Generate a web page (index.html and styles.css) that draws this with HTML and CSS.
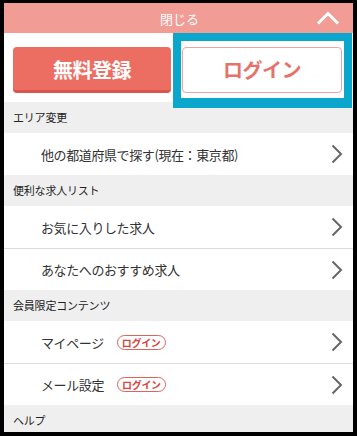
FILE: index.html
```html
<!DOCTYPE html>
<html lang="ja">
<head>
<meta charset="utf-8">
<link rel="stylesheet" href="styles.css">
</head>
<body>
<div class="frame">
  <div class="topbar">
    <span class="topbar-label">閉じる</span>
    <svg class="topbar-icon" width="24" height="14" viewBox="0 0 24 14"><polyline points="2,12.5 12,2.5 22,12.5" fill="none" stroke="#fff" stroke-width="3"/></svg>
  </div>
  <div class="actions">
    <a class="btn btn-register">無料登録</a>
    <a class="btn btn-login">ログイン</a>
  </div>
  <div class="highlight"></div>

  <div class="section-head">エリア変更</div>
  <div class="group">
    <div class="row"><span class="row-label">他の都道府県で探す(現在：東京都)</span><svg class="chev" width="12" height="20" viewBox="0 0 12 20"><polyline points="1.5,1.5 10,10 1.5,18.5" fill="none" stroke="#666" stroke-width="2"/></svg></div>
  </div>

  <div class="section-head">便利な求人リスト</div>
  <div class="group">
    <div class="row"><span class="row-label">お気に入りした求人</span><svg class="chev" width="12" height="20" viewBox="0 0 12 20"><polyline points="1.5,1.5 10,10 1.5,18.5" fill="none" stroke="#666" stroke-width="2"/></svg></div>
    <div class="row"><span class="row-label">あなたへのおすすめ求人</span><svg class="chev" width="12" height="20" viewBox="0 0 12 20"><polyline points="1.5,1.5 10,10 1.5,18.5" fill="none" stroke="#666" stroke-width="2"/></svg></div>
  </div>

  <div class="section-head">会員限定コンテンツ</div>
  <div class="group">
    <div class="row"><span class="row-label">マイページ</span><span class="badge">ログイン</span><svg class="chev" width="12" height="20" viewBox="0 0 12 20"><polyline points="1.5,1.5 10,10 1.5,18.5" fill="none" stroke="#666" stroke-width="2"/></svg></div>
    <div class="row"><span class="row-label">メール設定</span><span class="badge">ログイン</span><svg class="chev" width="12" height="20" viewBox="0 0 12 20"><polyline points="1.5,1.5 10,10 1.5,18.5" fill="none" stroke="#666" stroke-width="2"/></svg></div>
  </div>

  <div class="section-head">ヘルプ</div>
</div>
</body>
</html>
```

FILE: styles.css
```css
* { box-sizing: border-box; }
html, body { margin: 0; padding: 0; background: #000; }
body {
  font-family: "Noto Sans CJK JP", "Noto Sans", sans-serif;
}
.frame {
  position: relative;
  width: 357px;
  height: 436px;
  border-style: solid;
  border-color: #000;
  border-width: 3px 4px 4px 4px;
  background: #fff;
  overflow: hidden;
}
.topbar {
  position: relative;
  height: 30px;
  background: #f19c95;
  display: flex;
  align-items: center;
  justify-content: center;
}
.topbar-label {
  color: #fff;
  font-size: 13px;
  line-height: 1;
  margin-left: 2px;
}
.topbar-icon {
  position: absolute;
  right: 13px;
  top: 8px;
}
.actions {
  display: flex;
  gap: 11px;
  padding: 14px 11px 9px 9px;
  background: #fff;
}
.btn {
  flex: 1;
  height: 46px;
  border-radius: 4px;
  display: flex;
  align-items: center;
  justify-content: center;
  font-size: 20px;
  font-weight: bold;
  line-height: 1;
  letter-spacing: -0.5px;
}
.btn-register {
  background: #ec6e63;
  color: #fff;
  border-bottom: 3px solid #d8554b;
  padding-top: 2px;
}
.btn-login {
  background: #fff;
  color: #e4736b;
  border: 1px solid #eaa7a1;
}
.highlight {
  position: absolute;
  left: 169px;
  top: 30px;
  width: 179px;
  height: 75px;
  border-style: solid;
  border-color: #0aa6cb;
  border-width: 8px 8px 10px 8px;
}
.section-head {
  height: 31px;
  background: #efefef;
  padding-left: 9px;
  display: flex;
  align-items: center;
  font-size: 11px;
  line-height: 1;
  color: #222;
  letter-spacing: -0.2px;
}
.row {
  height: 42px;
  background: #fff;
  display: flex;
  align-items: center;
  padding-left: 37px;
  padding-right: 10px;
}
.row + .row {
  border-top: 1px solid #dcdcdc;
  height: 42px;
}
.row-label {
  font-size: 13px;
  line-height: 1;
  color: #333;
  letter-spacing: -0.4px;
}
.badge {
  margin-left: 13px;
  height: 15px;
  padding: 0 4px;
  border: 1px solid #e0635b;
  border-radius: 8px;
  color: #d9443c;
  font-size: 10px;
  line-height: 13px;
  font-weight: bold;
  letter-spacing: -0.3px;
}
.chev {
  margin-left: auto;
}
```
